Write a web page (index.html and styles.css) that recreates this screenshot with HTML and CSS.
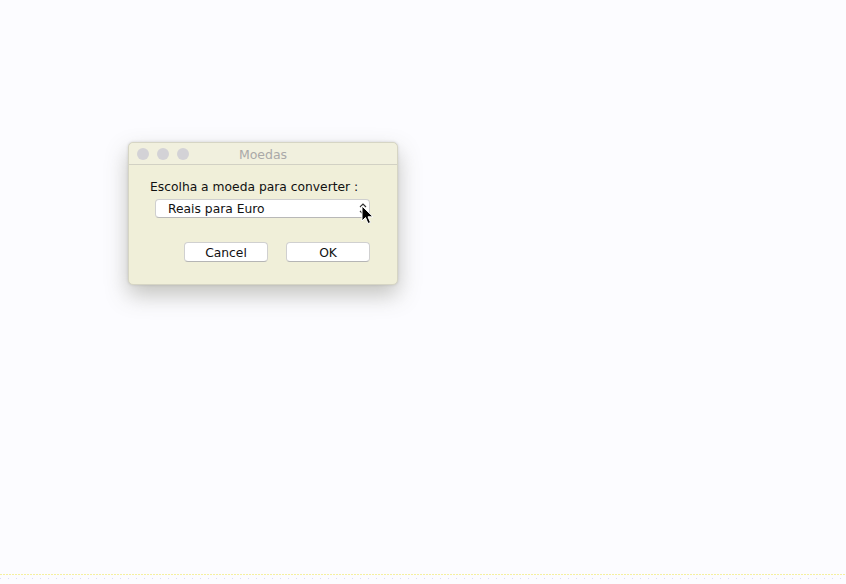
FILE: index.html
```html
<!DOCTYPE html>
<html>
<head>
<meta charset="utf-8">
<link rel="stylesheet" href="styles.css">
</head>
<body>
<div class="desktop">
  <div class="window">
    <div class="titlebar">
      <div class="lights">
        <span class="light"></span><span class="light"></span><span class="light"></span>
      </div>
      <div class="title">Moedas</div>
    </div>
    <div class="content">
      <div class="label">Escolha a moeda para converter :</div>
      <div class="combo">
        <span class="combo-text">Reais para Euro</span>
        <svg class="chev" width="8" height="14" viewBox="0 0 8 14"><path d="M1 5 L4 2 L7 5 M1 9 L4 12 L7 9" fill="none" stroke="#333" stroke-width="1.2"/></svg>
      </div>
      <div class="buttons">
        <div class="btn">Cancel</div>
        <div class="btn">OK</div>
      </div>
    </div>
    <svg class="cursor" width="13" height="20" viewBox="0 0 13 20"><path d="M1 1 L1 16 L4.5 12.5 L7 18.5 L9.5 17.5 L7 11.8 L12 11.8 Z" fill="#000" stroke="#fff" stroke-width="1"/></svg>
  </div>
  <div class="bottom-line"></div>
  <div class="bottom-dots"></div>
</div>
</body>
</html>
```
FILE: styles.css
```css
html, body {
  margin: 0;
  padding: 0;
  background: #fcfcff;
}
.desktop {
  position: relative;
  width: 846px;
  height: 584px;
  overflow: hidden;
  font-family: "DejaVu Sans", "Liberation Sans", sans-serif;
}
.window {
  position: absolute;
  left: 128px;
  top: 142px;
  width: 270px;
  height: 143px;
  box-sizing: border-box;
  background: #f0efd9;
  border: 1px solid #d6d5c4;
  border-radius: 5px;
  box-shadow: 0 10px 22px rgba(90, 90, 70, 0.35), 0 0 3px rgba(0,0,0,0.15);
  display: flex;
  flex-direction: column;
}
.titlebar {
  position: relative;
  height: 21px;
  border-bottom: 1px solid #d2d1c4;
  display: flex;
  align-items: center;
  justify-content: center;
  background: #f1f0de;
  border-radius: 5px 5px 0 0;
}
.lights {
  position: absolute;
  left: 8px;
  top: 5px;
  display: flex;
  gap: 8px;
}
.light {
  width: 12px;
  height: 12px;
  border-radius: 50%;
  background: #d3d2d6;
}
.title {
  font-size: 12.5px;
  color: #aaa9a8;
  padding-top: 2px;
}
.content {
  padding: 15px 27px 0 21px;
  display: flex;
  flex-direction: column;
}
.label {
  font-size: 12.3px;
  line-height: 15px;
  color: #111;
}
.combo {
  margin: 4px 0 0 5px;
  height: 19px;
  box-sizing: border-box;
  background: #fff;
  border: 1px solid #cfcfcf;
  border-bottom-color: #b8b8b8;
  border-radius: 4px;
  display: flex;
  align-items: center;
  justify-content: space-between;
  padding: 0 2px 0 12px;
}
.combo-text {
  font-size: 12.3px;
  color: #111;
}
.chev {
  display: block;
}
.buttons {
  margin-top: 24px;
  display: flex;
  justify-content: flex-end;
  gap: 18px;
}
.btn {
  width: 84px;
  height: 20px;
  box-sizing: border-box;
  background: #fff;
  border: 1px solid #d0d0d0;
  border-bottom-color: #b5b5b5;
  border-radius: 4px;
  font-size: 12.3px;
  color: #111;
  display: flex;
  align-items: center;
  justify-content: center;
  padding-top: 1px;
}
.cursor {
  position: absolute;
  left: 232px;
  top: 62px;
}
.bottom-line {
  position: absolute;
  left: 0;
  top: 574px;
  width: 846px;
  height: 1px;
  background: repeating-linear-gradient(90deg, #f5f0a0 0 2px, #fcfcff 2px 3px);
}
.bottom-dots {
  position: absolute;
  left: 0;
  top: 578px;
  width: 846px;
  height: 1px;
  background: repeating-linear-gradient(90deg, #dcdcf4 0 1px, transparent 1px 8px);
}
```
